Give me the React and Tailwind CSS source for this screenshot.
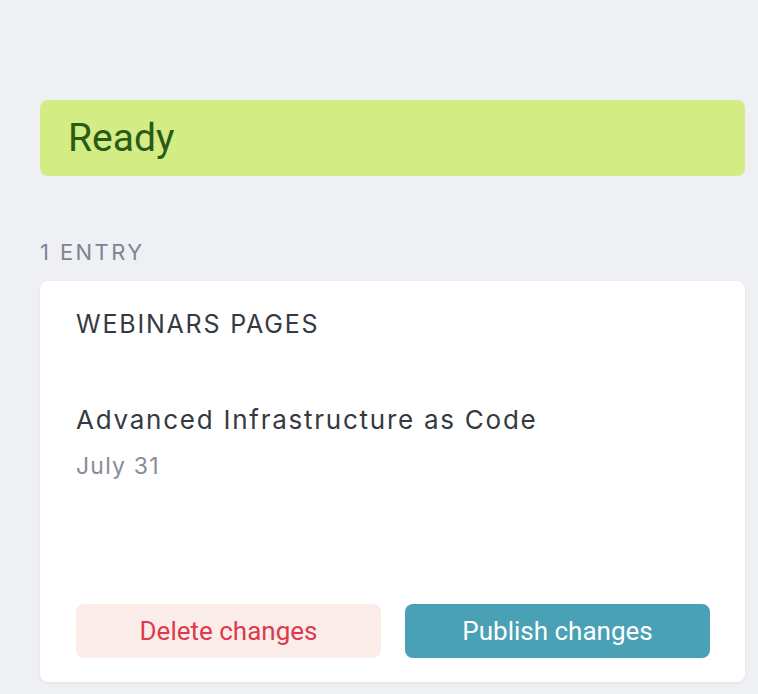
import React from 'react';

const App = () => {
  return (
    <div className="min-h-[694px] w-full bg-[#eff0f4] pl-[40px] pr-[13px] pt-[100px] pb-[12px] font-['Inter',sans-serif]">
      {/* Status banner */}
      <div className="flex h-[76px] items-center rounded-[8px] bg-[#d3ec84] pl-[28px]">
        <span className="font-['Roboto',sans-serif] text-[39px] text-[#2a5a17]">Ready</span>
      </div>

      <p className="mt-[62px] text-[22px] leading-[28px] tracking-[2.4px] text-[#7d8493]">1 ENTRY</p>

      {/* Entry card */}
      <div className="mt-[15px] flex h-[401px] flex-col rounded-[8px] bg-white pl-[36px] pr-[35px] pt-[28px] pb-[24px] shadow-[0_1px_3px_rgba(0,0,0,0.07)]">
        <h2 className="text-[25px] leading-[30px] tracking-[1.8px] text-[#343a3f]">WEBINARS PAGES</h2>

        <h3 className="mt-[65px] text-[26px] leading-[32px] tracking-[1.75px] text-[#343a3f]">
          Advanced Infrastructure as Code
        </h3>
        <p className="mt-[16px] text-[23px] leading-[28px] tracking-[1.2px] text-[#878d99]">July 31</p>

        <div className="mt-auto grid grid-cols-2 gap-[24px]">
          <button className="h-[54px] rounded-[8px] bg-[#fbeeea] font-['Roboto',sans-serif] text-[26px] text-[#e0394b]">
            Delete changes
          </button>
          <button className="h-[54px] rounded-[8px] bg-[#4aa1b6] font-['Roboto',sans-serif] text-[26px] text-white">
            Publish changes
          </button>
        </div>
      </div>
    </div>
  );
};

export default App;
